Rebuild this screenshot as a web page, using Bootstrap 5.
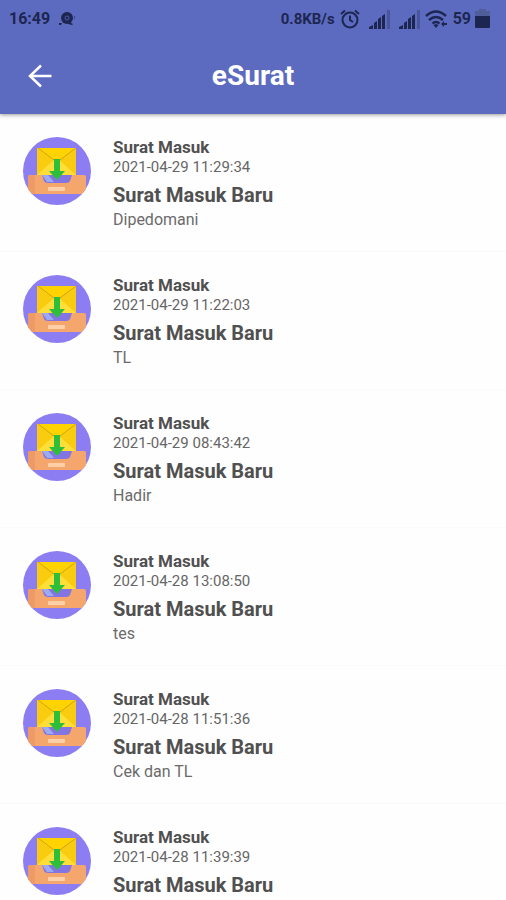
<!DOCTYPE html>
<html lang="id">
<head>
<meta charset="utf-8">
<meta name="viewport" content="width=device-width, initial-scale=1">
<title>eSurat</title>
<link href="https://cdn.jsdelivr.net/npm/bootstrap@5.3.0/dist/css/bootstrap.min.css" rel="stylesheet">
<style>
  body { font-family: Roboto, "Liberation Sans", sans-serif; background: #fefefe; color: #505050; height: 100vh; overflow: hidden; }
  .app-header { background: #5c6bc0; box-shadow: 0 1px 4px rgba(0, 0, 0, .4); }
  .status-bar { height: 38px; padding: 0 16px 0 9px; color: #1d2650; font-size: 16px; font-weight: 700; line-height: 20px; }
  .status-rate { font-size: 15px; }
  .title-bar { height: 76px; padding: 0 24px; grid-template-columns: 32px 1fr 32px; }
  .title-bar h1 { font-size: 28px; line-height: 32px; font-weight: 700; }
  .mail-item { height: 138px; padding: 23px 23px 0; gap: 22px; border-color: #fafafa; background: #fefefe; color: #505050; }
  .mail-kind { font-size: 17px; line-height: 20px; font-weight: 700; }
  .mail-time { font-size: 15px; line-height: 20px; color: #666; }
  .mail-title { font-size: 20px; line-height: 28px; font-weight: 700; margin-top: 4px; }
  .mail-note { font-size: 16px; line-height: 22px; color: #6b6b6b; }
</style>
<script src="https://cdn.jsdelivr.net/npm/bootstrap@5.3.0/dist/js/bootstrap.bundle.min.js"></script>
</head>
<body class="d-flex flex-column">
<svg class="d-none" aria-hidden="true">
  <defs>
    <symbol id="inbox" viewBox="0 0 68 68">
      <path fill="#8d7df2" d="M0 0h68v68H0z"/>
      <path fill="#f9cc10" d="M14 11h39v31H14z"/>
      <path fill="#ffde3a" d="M14 38 31 23h5l17 15v4H14z"/>
      <path fill="#fed301" d="M14 11h39L37 23q-3 2-6 0z"/>
      <path fill="none" stroke="#d0a414" d="m15 11 16 12q3 2 6 0l16-12"/>
      <path fill="#8374e4" d="M18 38h32v10H18z"/>
      <path fill="#9caaf2" d="m19 38 5 7h7l-6-7z"/>
      <path fill="#2dbf3c" d="M31 22h6v12h5l-8 9-8-9h5z"/>
      <path fill="#f5a66c" d="M7 38h12l2 6q1 2 4 2h18q3 0 4-2l2-6h12q2 0 2 2v17H5V40q0-2 2-2z"/>
      <path fill="#ee9a66" d="M7 38h5v19H5V40q0-2 2-2z"/>
      <rect x="25" y="50" width="17" height="4" rx="1" fill="#ffd0a8"/>
    </symbol>
    <symbol id="signal" viewBox="0 0 22 20">
      <path fill="#1d2650" d="M0 20v-2l4-2v4zM5 14l3-2v8H5zM9 10l3-2v12H9zM13 7l3-2v15h-3z"/>
      <path fill="#4a569c" d="M18 1h3v19h-3z"/>
    </symbol>
  </defs>
</svg>

<header class="app-header flex-shrink-0 position-relative z-1">
  <div class="status-bar d-flex align-items-center justify-content-between">
    <div class="d-flex align-items-center gap-2">
      <span>16:49</span>
      <svg width="18" height="16" viewBox="0 0 18 16" fill="#1d2650" aria-hidden="true">
        <circle cx="9" cy="7" r="6"/><circle cx="9" cy="7" r="2" fill="none" stroke="#4d5aa8"/><path d="M1 12h3l-1 2H1zM11 11l4 2-1 1-4-1z"/><path d="M16 5h1v3h-1z" opacity=".5"/>
      </svg>
    </div>
    <div class="d-flex align-items-center gap-1">
      <span class="status-rate">0.8KB/s</span>
      <svg width="22" height="20" viewBox="0 0 22 20" fill="none" stroke="#1d2650" stroke-width="2" aria-hidden="true">
        <circle cx="11" cy="11" r="7.500"/><path d="M11 6.500V11l3 2M2 5l4-3.500M20 5l-4-3.500"/>
      </svg>
      <svg class="ms-1" width="22" height="20" aria-hidden="true"><use href="#signal"/></svg>
      <svg class="ms-1" width="22" height="20" aria-hidden="true"><use href="#signal"/></svg>
      <svg width="24" height="20" viewBox="0 0 24 20" fill="none" stroke="#1d2650" stroke-width="2.500" aria-hidden="true">
        <path d="M1 7q10-9 20 0M4 11q7-6 14 0M7.500 14.500q3.500-3 7 0"/><path fill="#1d2650" stroke="none" d="m8.500 16 2.500-1 2.500 1L11 19zM16 15l3-3v2h3v2h-3v2z"/>
      </svg>
      <span>59</span>
      <svg width="15" height="20" viewBox="0 0 15 20" aria-hidden="true">
        <path fill="#505d9b" d="M4 0h7v2h4v7H0V2h4z"/><path fill="#1d2650" d="M0 7h15v11q0 1-1 1H1q-1 0-1-1z"/>
      </svg>
    </div>
  </div>
  <nav class="title-bar d-grid align-items-center text-white" aria-label="eSurat">
    <button type="button" class="btn p-0 border-0 d-flex justify-content-center text-white" aria-label="Kembali">
      <svg width="26" height="26" viewBox="0 0 26 26" fill="none" stroke="currentColor" stroke-width="2.500" aria-hidden="true"><path d="M24.500 13H3M14 2.500 3 13l11 10.500"/></svg>
    </button>
    <h1 class="m-0 text-center">eSurat</h1>
  </nav>
</header>

<main class="list-group list-group-flush rounded-0 overflow-hidden flex-grow-1">
  <article class="list-group-item mail-item d-flex flex-shrink-0">
    <svg class="flex-shrink-0 rounded-circle" width="68" height="68" aria-hidden="true"><use href="#inbox"/></svg>
    <div><div class="mail-kind">Surat Masuk</div><div class="mail-time">2021-04-29 11:29:34</div><h2 class="mail-title mb-0">Surat Masuk Baru</h2><p class="mail-note mb-0">Dipedomani</p></div>
  </article>
  <article class="list-group-item mail-item d-flex flex-shrink-0">
    <svg class="flex-shrink-0 rounded-circle" width="68" height="68" aria-hidden="true"><use href="#inbox"/></svg>
    <div><div class="mail-kind">Surat Masuk</div><div class="mail-time">2021-04-29 11:22:03</div><h2 class="mail-title mb-0">Surat Masuk Baru</h2><p class="mail-note mb-0">TL</p></div>
  </article>
  <article class="list-group-item mail-item d-flex flex-shrink-0">
    <svg class="flex-shrink-0 rounded-circle" width="68" height="68" aria-hidden="true"><use href="#inbox"/></svg>
    <div><div class="mail-kind">Surat Masuk</div><div class="mail-time">2021-04-29 08:43:42</div><h2 class="mail-title mb-0">Surat Masuk Baru</h2><p class="mail-note mb-0">Hadir</p></div>
  </article>
  <article class="list-group-item mail-item d-flex flex-shrink-0">
    <svg class="flex-shrink-0 rounded-circle" width="68" height="68" aria-hidden="true"><use href="#inbox"/></svg>
    <div><div class="mail-kind">Surat Masuk</div><div class="mail-time">2021-04-28 13:08:50</div><h2 class="mail-title mb-0">Surat Masuk Baru</h2><p class="mail-note mb-0">tes</p></div>
  </article>
  <article class="list-group-item mail-item d-flex flex-shrink-0">
    <svg class="flex-shrink-0 rounded-circle" width="68" height="68" aria-hidden="true"><use href="#inbox"/></svg>
    <div><div class="mail-kind">Surat Masuk</div><div class="mail-time">2021-04-28 11:51:36</div><h2 class="mail-title mb-0">Surat Masuk Baru</h2><p class="mail-note mb-0">Cek dan TL</p></div>
  </article>
  <article class="list-group-item mail-item d-flex flex-shrink-0">
    <svg class="flex-shrink-0 rounded-circle" width="68" height="68" aria-hidden="true"><use href="#inbox"/></svg>
    <div><div class="mail-kind">Surat Masuk</div><div class="mail-time">2021-04-28 11:39:39</div><h2 class="mail-title mb-0">Surat Masuk Baru</h2></div>
  </article>
</main>
</body>
</html>
